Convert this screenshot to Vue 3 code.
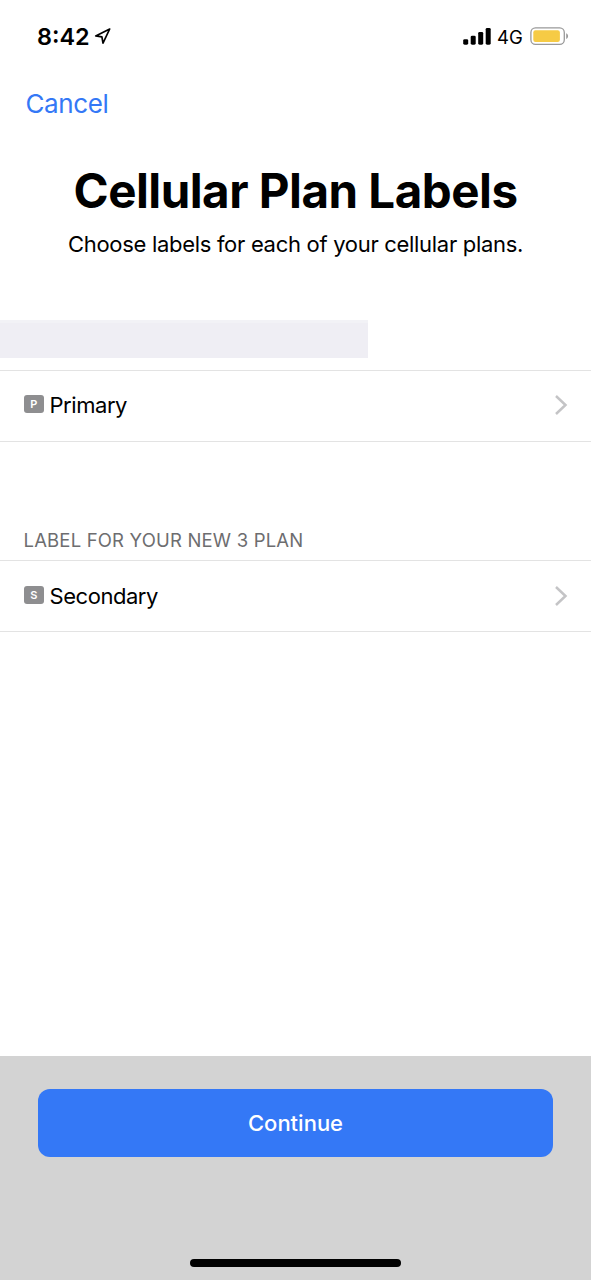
<script setup>
const bars = [5.5, 9, 12.8, 16.8]
</script>

<template>
  <main class="screen">
    <header class="status">
      <span class="time">8:42</span>
      <svg class="location" width="18" height="18" viewBox="0 0 18 18">
        <path d="M15.7 2 L1.7 8.9 L7.9 9.9 L9 16.2 Z" />
      </svg>
      <svg class="signal" width="28" height="18" viewBox="0 0 28 18">
        <rect v-for="(h, i) in bars" :key="i" :x="0.2 + i * 7.5" :y="17.7 - h" width="5" :height="h" rx="1.4" />
      </svg>
      <span class="network">4G</span>
      <svg class="battery" width="40" height="19" viewBox="0 0 40 19">
        <rect x="0.9" y="0.9" width="33.4" height="16.4" rx="4.6" fill="#fff" stroke="#999" stroke-width="1.3" />
        <rect x="3.3" y="3.2" width="26.6" height="11.8" rx="2.2" fill="#f6cb45" />
        <path d="M36.2 6.2 C38.7 7.2 38.7 11 36.2 12 Z" fill="#999" />
      </svg>
    </header>

    <nav class="nav"><span class="cancel">Cancel</span></nav>

    <section class="intro">
      <h1>Cellular Plan Labels</h1>
      <p>Choose labels for each of your cellular plans.</p>
    </section>

    <div class="redacted"></div>

    <div class="row first">
      <span class="badge">P</span>
      <span class="name">Primary</span>
      <svg class="chevron" width="14" height="22" viewBox="0 0 14 22"><path d="M2 2 L11.5 11 L2 20" /></svg>
    </div>

    <h2>LABEL FOR YOUR NEW 3 PLAN</h2>

    <div class="row second">
      <span class="badge">S</span>
      <span class="name">Secondary</span>
      <svg class="chevron" width="14" height="22" viewBox="0 0 14 22"><path d="M2 2 L11.5 11 L2 20" /></svg>
    </div>

    <footer class="footer">
      <button type="button"><span>Continue</span></button>
      <div class="home"></div>
    </footer>
  </main>
</template>

<style>
body {
  margin: 0;
  background: #fff;
}
</style>

<style scoped>
.screen {
  width: 591px;
  height: 1280px;
  display: flex;
  flex-direction: column;
  overflow: hidden;
  background: #fff;
  color: #000;
  font-family: Inter, "Liberation Sans", sans-serif;
}

.status {
  height: 73px;
  display: flex;
  align-items: center;
  box-sizing: border-box;
  padding: 1px 21px 0 37px;
  flex: none;
}

.status svg {
  margin-bottom: 2px;
}

.time {
  width: 57px;
  font-size: 23.4px;
  font-weight: 600;
  line-height: 28px;
}

.location {
  fill: none;
  stroke: #000;
  stroke-width: 1.7;
  stroke-linejoin: round;
}

.signal {
  margin-left: auto;
}

.network {
  width: 33px;
  margin-left: 6px;
  font-size: 18.5px;
  line-height: 26px;
}

.nav {
  height: 63px;
  display: flex;
  align-items: center;
  box-sizing: border-box;
  padding: 0 0 2px 25.5px;
  flex: none;
}

.cancel {
  color: #3478f6;
  font-size: 26px;
  line-height: 32px;
  letter-spacing: -0.4px;
}

.intro {
  height: 184px;
  flex: none;
  text-align: center;
  white-space: nowrap;
}

h1 {
  margin: 26px 0 0;
  font-size: 47.5px;
  line-height: 58px;
  font-weight: 700;
  letter-spacing: -0.5px;
}

p {
  margin: 10px 0 0;
  font-size: 22px;
  line-height: 28px;
  letter-spacing: -0.3px;
}

.redacted {
  width: 368px;
  height: 38px;
  flex: none;
  background: linear-gradient(#f2f2f6 3px, #efeef4 3px);
}

.row {
  height: 72px;
  display: flex;
  align-items: center;
  box-sizing: border-box;
  padding: 0 23px 0 23.5px;
  border-top: 1.5px solid #e3e3e3;
  border-bottom: 1.5px solid #e3e3e3;
  flex: none;
}

.first {
  margin-top: 12px;
  padding-bottom: 2px;
}

.badge {
  width: 20.5px;
  height: 18px;
  margin: 0 5.5px 2px 0;
  border-radius: 3px;
  background: #8e8e90;
  color: #fff;
  font-size: 11px;
  font-weight: 600;
  line-height: 18px;
  text-align: center;
}

.name {
  font-size: 22px;
  line-height: 28px;
  letter-spacing: -0.45px;
}

.chevron {
  margin-left: auto;
  fill: none;
  stroke: #c4c4c6;
  stroke-width: 2.5;
}

h2 {
  margin: 85px 0 0 23.5px;
  height: 26px;
  font-size: 18.5px;
  line-height: 26px;
  font-weight: 400;
  letter-spacing: 0.18px;
  color: #6d6d6f;
}

.second {
  margin-top: 7px;
}

.footer {
  height: 224px;
  margin-top: auto;
  display: flex;
  flex-direction: column;
  align-items: center;
  box-sizing: border-box;
  padding: 33px 0 13px;
  background: #d3d3d3;
  flex: none;
}

button {
  width: 515px;
  height: 68px;
  padding: 0;
  border: 0;
  border-radius: 12px;
  background: #3478f6;
  color: #fff;
  font: 500 22px/28px Inter, "Liberation Sans", sans-serif;
}

.home {
  width: 211px;
  height: 8px;
  margin-top: auto;
  border-radius: 4px;
  background: #000;
}
</style>
